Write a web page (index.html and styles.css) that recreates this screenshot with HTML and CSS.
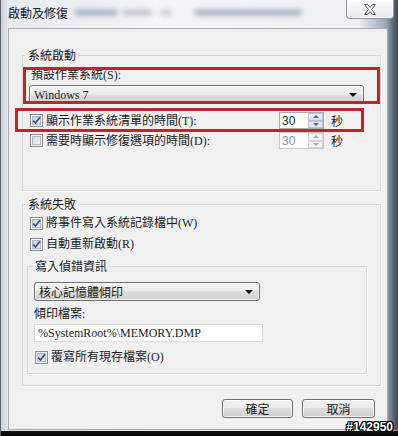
FILE: index.html
```html
<!DOCTYPE html>
<html lang="zh-Hant">
<head>
<meta charset="UTF-8">
<title>啟動及修復</title>
<link rel="stylesheet" href="styles.css">
</head>
<body>
<div class="window">
  <div class="titlebar">
    <span class="title">啟動及修復</span>
    <span class="smear s1"></span>
    <span class="smear s2"></span>
    <span class="smear s3"></span>
    <span class="smear s4"></span>
    <button class="close" aria-label="關閉">
      <svg width="12" height="11" viewBox="0 0 12 11"><path d="M0.5 0.5h3l2.5 3 2.5-3h3l-4 5 4 5h-3l-2.5-3-2.5 3h-3l4-5z" fill="#fff" stroke="#50565e" stroke-width="1" stroke-linejoin="round"/></svg>
    </button>
  </div>

  <div class="client">
    <!-- 系統啟動 -->
    <fieldset class="group g-start">
      <legend>系統啟動</legend>
      <div class="label l-os">預設作業系統(S):</div>
      <div class="combo c-os"><span>Windows 7</span><i class="arrow"></i></div>
      <div class="row r-time">
        <span class="cb checked"><svg width="9" height="9" viewBox="0 0 9 9"><path d="M1.2 4.6 L3.5 7 L8 1.3" fill="none" stroke="#3d4f86" stroke-width="1.8"/></svg></span>
        <span class="text">顯示作業系統清單的時間(T):</span>
        <span class="spin"><span class="val">30</span><span class="btns"><span class="up"></span><span class="down"></span></span></span>
        <span class="unit">秒</span>
      </div>
      <div class="row r-repair">
        <span class="cb"></span>
        <span class="text">需要時顯示修復選項的時間(D):</span>
        <span class="spin disabled"><span class="val">30</span><span class="btns"><span class="up"></span><span class="down"></span></span></span>
        <span class="unit">秒</span>
      </div>
    </fieldset>

    <!-- 系統失敗 -->
    <fieldset class="group g-fail">
      <legend>系統失敗</legend>
      <div class="row r-log">
        <span class="cb checked"><svg width="9" height="9" viewBox="0 0 9 9"><path d="M1.2 4.6 L3.5 7 L8 1.3" fill="none" stroke="#3d4f86" stroke-width="1.8"/></svg></span>
        <span class="text">將事件寫入系統記錄檔中(W)</span>
      </div>
      <div class="row r-restart">
        <span class="cb checked"><svg width="9" height="9" viewBox="0 0 9 9"><path d="M1.2 4.6 L3.5 7 L8 1.3" fill="none" stroke="#3d4f86" stroke-width="1.8"/></svg></span>
        <span class="text">自動重新啟動(R)</span>
      </div>

      <fieldset class="group g-debug">
        <legend>寫入偵錯資訊</legend>
        <div class="combo c-dump"><span>核心記憶體傾印</span><i class="arrow"></i></div>
        <div class="label l-file">傾印檔案:</div>
        <div class="field">%SystemRoot%\MEMORY.DMP</div>
        <div class="row r-over">
          <span class="cb checked"><svg width="9" height="9" viewBox="0 0 9 9"><path d="M1.2 4.6 L3.5 7 L8 1.3" fill="none" stroke="#3d4f86" stroke-width="1.8"/></svg></span>
          <span class="text">覆寫所有現存檔案(O)</span>
        </div>
      </fieldset>
    </fieldset>

    <div class="buttons">
      <button class="btn ok">確定</button>
      <button class="btn cancel">取消</button>
    </div>
  </div>

  <!-- 紅框標示 -->
  <div class="mark m-os"></div>
  <div class="mark m-time"></div>
  <div class="stamp">#142950</div>
</div>
</body>
</html>
```

FILE: styles.css
```css
* { box-sizing: border-box; }

body {
  margin: 0;
  background: #fff;
  font: 12px/14px "Liberation Serif", "Noto Sans CJK TC", serif;
  color: #1b1b1b;
}

.window {
  position: relative;
  width: 398px; height: 436px;
  overflow: hidden;
  display: flex; flex-direction: column;
  padding-bottom: 6px;
  border-left: 1px solid #5d6167;
  background:
    linear-gradient(to top, #050505 0, #111 5px, #d9dde1 5px, transparent 6px),
    linear-gradient(to right, #c9d1d9 0, #e6ebef 2%, #f4f6f8 40%, #eef1f4 90%, #9aa7b4 97%, #56636f 99%, #3c4650 100%);
}

/* タイトルバー */
.titlebar {
  height: 28px;
  display: flex; align-items: center;
  padding-left: 7px;
  position: relative;
}
.title {
  font-family: "Noto Sans CJK TC", sans-serif;
  font-size: 12px; color: #202020;
  margin-top: -2px;
}
.smear {
  height: 7px; margin-top: -3px;
  background: #9eabbd; border-radius: 4px;
  filter: blur(2.4px); opacity: 0.8;
}
.s1 { width: 44px; margin-left: 6px; }
.s2 { width: 30px; margin-left: 4px; opacity: 0.55; }
.s3 { width: 12px; margin-left: 8px; opacity: 0.45; }
.s4 { width: 108px; margin-left: 22px; }

.close {
  position: absolute; top: 0; left: 345px;
  width: 48px; height: 19px;
  padding: 0;
  display: flex; align-items: center; justify-content: center;
  border: 1px solid #8e98a3; border-top: none;
  border-radius: 0 0 4px 4px;
  background: linear-gradient(#fbfcfd, #e7ebef);
  box-shadow: inset 0 0 0 1px rgba(255,255,255,0.8);
}

/* クライアント領域 */
.client {
  flex: 1;
  margin: 0 10px 0 7px;
  border: 1px solid #a3abb3;
  background: #f0f0f0;
  display: flex; flex-direction: column;
}

.group {
  margin: 0; padding: 0;
  min-inline-size: 0;
  border: 1px solid #d5d8dc;
  box-shadow: 1px 1px 0 #fff;
}
.group legend {
  padding: 0 2px; margin-left: 3px;
  line-height: 14px;
  font-family: "Noto Sans CJK TC", sans-serif;
}

.g-start { margin: 19px 0 0 13px; width: 359px; padding-bottom: 41px; }
.g-fail { margin: 6px 0 0 13px; width: 359px; padding-bottom: 11px; }
.g-debug { margin: 7px 0 0 4px; width: 340px; padding-bottom: 8px; }
.g-debug legend { margin-left: 5px; }

.label { font-family: "Liberation Serif", "Noto Sans CJK TC", serif; }
.l-os { margin: 6px 0 0 8px; }
.l-file { margin: 6px 0 0 6px; }

/* コンボボックス */
.combo {
  height: 19px;
  display: flex; align-items: center; justify-content: space-between;
  padding: 0 6px 0 4px;
  border: 1px solid #707070; border-radius: 3px;
  background: linear-gradient(#f3f3f3 0, #ebebeb 50%, #dddddd 50%, #d0d0d0 100%);
  box-shadow: inset 0 0 0 1px rgba(255,255,255,0.7);
}
.combo .arrow {
  width: 0; height: 0;
  border-left: 4px solid transparent; border-right: 4px solid transparent;
  border-top: 4px solid #111;
}
.c-os { margin: 3px 0 0 6px; width: 335px; }
.c-dump { margin: 9px 0 0 6px; width: 226px; }
.c-dump span { font-family: "Noto Sans CJK TC", sans-serif; }

/* 行 */
.row { display: flex; align-items: center; }
.r-time { margin: 8px 0 0 7px; height: 17px; }
.r-repair { margin: 3px 0 0 7px; height: 17px; }
.r-log { margin: 4px 0 0 7px; height: 16px; }
.r-restart { margin: 5px 0 0 7px; height: 16px; }
.r-over { margin: 7px 0 0 7px; height: 16px; }
.r-time .text, .r-repair .text { width: 233px; }
.row .text { margin-left: 1px; }

/* チェックボックス */
.cb {
  width: 13px; height: 13px; flex: none;
  display: flex; align-items: center; justify-content: center;
  margin-right: 2px;
  border: 1px solid #8e8f8f;
  background: linear-gradient(135deg, #d2d6db, #f6f7f8);
  box-shadow: inset 0 0 0 1px #f4f4f4, inset 0 0 0 2px #b3b9c0;
}
.cb.checked { background: linear-gradient(135deg, #c6ccd6, #eef1f5); }

/* スピン */
.spin {
  width: 45px; height: 17px;
  display: flex;
  border: 1px solid #abadb3;
  background: #fff;
}
.spin .val {
  flex: 1;
  padding: 1px 0 0 2px;
  font-family: "Liberation Sans", sans-serif;
}
.spin .btns { width: 16px; display: flex; flex-direction: column; padding: 0 0 0 1px; }
.spin .up, .spin .down {
  flex: 1;
  display: flex; align-items: center; justify-content: center;
  border: 1px solid #b6c3d4;
  background: linear-gradient(#eef2f7, #d6dfea);
}
.spin .up::after, .spin .down::after {
  content: ""; width: 0; height: 0;
  border-left: 3px solid transparent; border-right: 3px solid transparent;
}
.spin .up::after { border-bottom: 3px solid #4e6088; }
.spin .down::after { border-top: 3px solid #4e6088; }
.spin.disabled { border-color: #c8c8c8; }
.spin.disabled .val { color: #8d8d8d; }
.spin.disabled .up, .spin.disabled .down { border-color: #d4d4d4; background: #f3f3f3; }
.spin.disabled .up::after { border-bottom-color: #a8a8a8; }
.spin.disabled .down::after { border-top-color: #a8a8a8; }
.unit { margin-left: 7px; font-family: "Noto Sans CJK TC", sans-serif; }

/* テキスト欄 */
.field {
  margin: 3px 0 0 6px;
  width: 229px; height: 18px;
  padding: 1px 0 0 3px;
  border: 1px solid #d9dbde;
  background: #fff;
}

/* ボタン */
.buttons {
  display: flex; justify-content: flex-end; gap: 9px;
  margin-top: 13px; padding-right: 12px;
}
.btn {
  height: 19px; padding: 0;
  font: 12px/14px "Noto Sans CJK TC", sans-serif; color: #1b1b1b;
  border: 1px solid #707070; border-radius: 3px;
  background: linear-gradient(#f3f3f3 0, #ebebeb 50%, #dddddd 50%, #cfcfcf 100%);
  box-shadow: inset 0 0 0 1px rgba(255,255,255,0.75);
}
.ok { width: 71px; }
.cancel { width: 73px; }

/* 赤枠 */
.mark { position: absolute; border: 3px solid #c3232c; }
.m-os { left: 22px; top: 67px; width: 357px; height: 37px; }
.m-time { left: 14px; top: 108px; width: 349px; height: 24px; }

.stamp {
  position: absolute; right: 5px; bottom: 2px;
  font: bold 12px/13px "Liberation Sans", sans-serif;
  color: #fff;
  text-shadow: 1px 0 0 #000, -1px 0 0 #000, 0 1px 0 #000, 0 -1px 0 #000, 1px 1px 0 #000, -1px -1px 0 #000, 1px -1px 0 #000, -1px 1px 0 #000;
}
```
